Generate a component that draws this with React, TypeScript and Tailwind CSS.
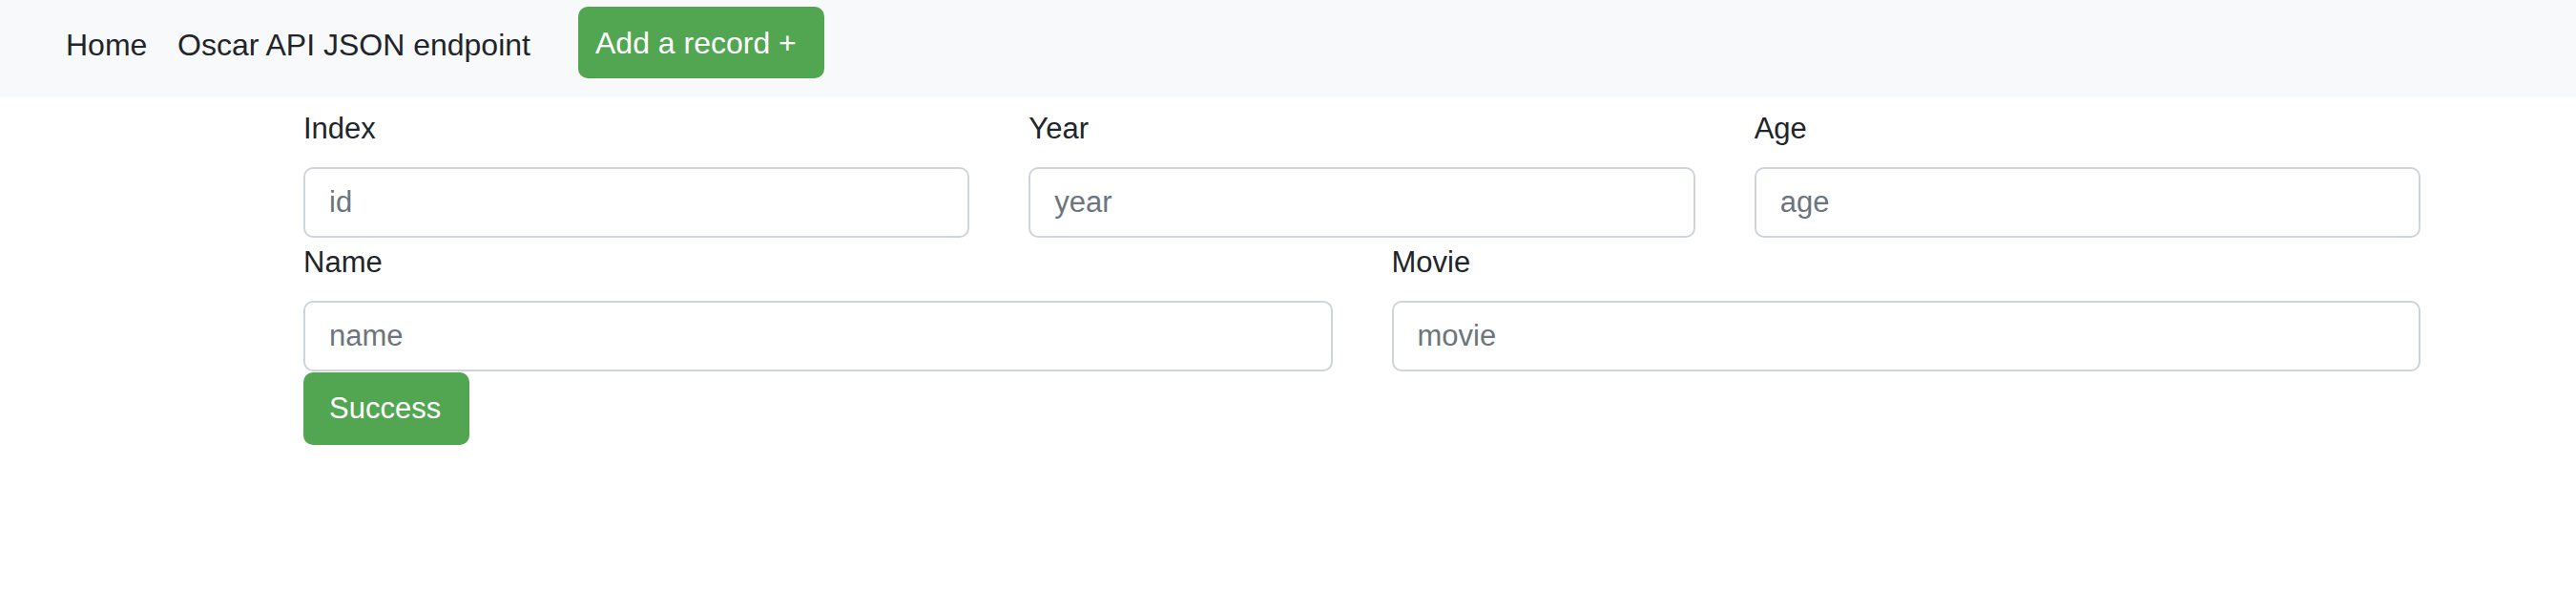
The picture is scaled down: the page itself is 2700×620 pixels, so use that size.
import React from "react";

const font = { fontFamily: '"Liberation Sans", Arial, sans-serif' };

function Field({ label, placeholder }: { label: string; placeholder: string }) {
  return (
    <div className="flex flex-col">
      <label className="text-[31px] leading-[46px] text-[#212529] mb-[17px]">{label}</label>
      <input
        placeholder={placeholder}
        className="h-[74px] w-full rounded-[10px] border-2 border-[#ced4da] bg-white pl-[25px] text-[31px] text-[#212529] placeholder:text-[#6c757d] outline-none"
      />
    </div>
  );
}

export default function App() {
  return (
    <div className="min-h-[620px] bg-white" style={font}>
      {/* Navbar */}
      <nav className="flex h-[102px] items-start bg-[#f8f9fa] pl-[69px]">
        <a className="mt-[24px] w-[117px] text-[32px] leading-[46px] text-[#212529]">Home</a>
        <a className="mt-[24px] w-[420px] text-[32px] leading-[46px] text-[#212529]">Oscar API JSON endpoint</a>
        <button className="mt-[7px] flex h-[75px] w-[258px] items-center rounded-[10px] bg-[#52a652] pl-[18px] text-[32px] leading-[46px] text-white">
          Add a record +
        </button>
      </nav>

      {/* Form */}
      <form className="ml-[318px] mt-[10px] w-[2219px]">
        <div className="grid grid-cols-3 gap-x-[62px]">
          <Field label="Index" placeholder="id" />
          <Field label="Year" placeholder="year" />
          <Field label="Age" placeholder="age" />
        </div>
        <div className="mt-[3px] grid grid-cols-2 gap-x-[62px]">
          <Field label="Name" placeholder="name" />
          <Field label="Movie" placeholder="movie" />
        </div>
        <button
          type="button"
          className="mt-[1px] flex h-[76px] w-[174px] items-center rounded-[10px] bg-[#52a652] pl-[27px] text-[31px] leading-[46px] text-white"
        >
          Success
        </button>
      </form>
    </div>
  );
}
